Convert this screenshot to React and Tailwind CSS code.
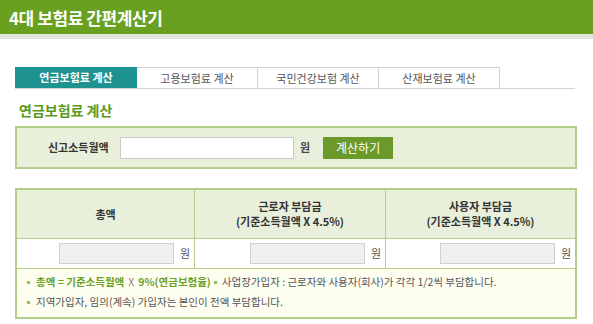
import React, { useState } from "react";

const tabs = ["연금보험료 계산", "고용보험료 계산", "국민건강보험 계산", "산재보험료 계산"];

const font = { fontFamily: '"Noto Sans CJK KR", "Noto Sans", sans-serif' };

const App = () => {
  const [active, setActive] = useState(0);
  const [income, setIncome] = useState("");

  return (
    <div className="w-[593px] h-[324px] bg-white overflow-hidden" style={font}>
      {/* Header */}
      <div className="h-[34px] bg-[#69a020] flex items-center pl-[9px]">
        <h1 className="text-white text-[17px] font-bold tracking-tight leading-none">4대 보험료 간편계산기</h1>
      </div>
      <div className="h-[5px] bg-[#e3e3de]" />

      <div className="px-[15px] pr-[16px]">
        {/* Tabs */}
        <div className="mt-[28px] mr-[2px] flex border-b border-[#d4d4d4] h-[22px]">
          {tabs.map((t, i) => (
            <button
              key={t}
              onClick={() => setActive(i)}
              className={`h-[21px] text-[11px] leading-none flex items-center justify-center ${
                i === 0 ? "w-[122px]" : "w-[121px]"
              } ${
                i === active
                  ? "bg-[#1e928e] text-white font-bold"
                  : "bg-white text-[#555] border-t border-r border-[#d4d4d4]"
              }`}
            >
              {t}
            </button>
          ))}
        </div>

        {/* Section title */}
        <h2 className="mt-[14px] ml-[4px] text-[14px] font-bold text-[#5c9a1c] leading-none">연금보험료 계산</h2>

        {/* Input box */}
        <div className="mt-[9px] h-[43px] border-2 border-[#b3cd8a] bg-[#e8f0dc] flex items-center">
          <span className="ml-[31px] w-[72px] text-[11px] font-bold text-[#333]">신고소득월액</span>
          <input
            value={income}
            onChange={(e) => setIncome(e.target.value)}
            className="h-[22px] w-[174px] bg-white border border-[#c9c9c9] outline-none px-1 text-[11px]"
          />
          <span className="ml-[6px] text-[11px] font-bold text-[#444]">원</span>
          <button className="ml-[13px] h-[22px] w-[70px] bg-[#6b9a2a] text-white text-[12px] leading-none">계산하기</button>
        </div>

        {/* Result table */}
        <div className="mt-[19px] border-2 border-[#b3cd8a]">
          <div className="grid grid-cols-[178px_191px_1fr] bg-[#e8f0dc] h-[49px] border-b border-[#b3cd8a]">
            <div className="flex items-center justify-center text-[11px] font-bold text-[#333] border-r border-[#b3cd8a]">총액</div>
            <div className="flex flex-col items-center justify-center text-[11px] font-bold text-[#333] leading-[15px] border-r border-[#b3cd8a]">
              <span>근로자 부담금</span>
              <span>(기준소득월액 X 4.5%)</span>
            </div>
            <div className="flex flex-col items-center justify-center text-[11px] font-bold text-[#333] leading-[15px]">
              <span>사용자 부담금</span>
              <span>(기준소득월액 X 4.5%)</span>
            </div>
          </div>
          <div className="grid grid-cols-[178px_191px_1fr] h-[30px] border-b border-[#b3cd8a] bg-white">
            {[0, 1, 2].map((i) => (
              <div
                key={i}
                className={`flex items-center justify-end pr-[4px] gap-[6px] ${i < 2 ? "border-r border-[#b3cd8a]" : ""}`}
              >
                <div className="h-[21px] w-[115px] bg-[#efefef] border border-[#cfcfcf]" />
                <span className="text-[11px] text-[#555]">원</span>
              </div>
            ))}
          </div>
          <div className="bg-[#fdfdf0] pl-[8px] pt-[3px] pb-[5px] text-[10.5px] text-[#555]">
            <p className="h-[20px] flex items-center">
              <span className="text-[#6aa128] mr-[4px]">∘</span>
              <span className="text-[#6aa128] font-bold">총액 = 기준소득월액</span>
              <span className="mx-[4px] text-[#888]">X</span>
              <span className="text-[#6aa128] font-bold">9%(연금보험율)</span>
              <span className="text-[#6aa128] mx-[1px]">∘</span>
              <span className="ml-[2px]">사업장가입자 : 근로자와 사용자(회사)가 각각 1/2씩 부담합니다.</span>
            </p>
            <p className="h-[20px] flex items-center">
              <span className="text-[#6aa128] mr-[4px]">∘</span>
              <span>지역가입자, 임의(계속) 가입자는 본인이 전액 부담합니다.</span>
            </p>
          </div>
        </div>
      </div>
    </div>
  );
};

export default App;
